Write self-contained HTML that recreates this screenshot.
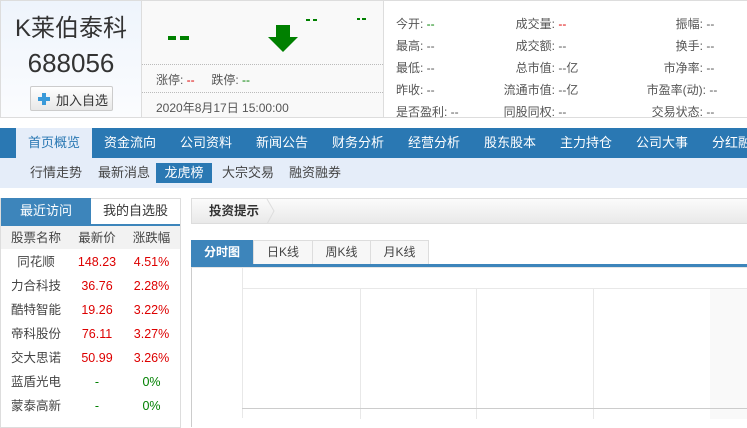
<!DOCTYPE html>
<html><head><meta charset="utf-8"><style>
*{margin:0;padding:0;box-sizing:border-box}
body{width:747px;height:416px;overflow:hidden;background:#fff;font-family:"Liberation Sans","Noto Sans CJK SC",sans-serif;font-size:12px;color:#333;position:relative}
.a{position:absolute;white-space:nowrap}
.g{color:#008000}.r{color:#d00}
</style></head><body>
<!-- top left -->
<div class="a" style="left:0;top:0;width:142px;height:118px;background:linear-gradient(#eef4fc,#fbfcfe);border:1px solid #ddd"></div>
<div class="a" style="left:0;top:8px;width:142px;text-align:center;font-size:24px;color:#333">K莱伯泰科</div>
<div class="a" style="left:0;top:48px;width:142px;text-align:center;font-size:26px;color:#333">688056</div>
<div class="a" style="left:30px;top:86px;width:83px;height:25px;border:1px solid #ccc;border-radius:2px;background:linear-gradient(#fff,#e8e8e8)"></div>
<div class="a" style="left:38px;top:93px;width:12px;height:12px"><div style="position:absolute;left:4px;top:0;width:4px;height:12px;background:#3a9ad9"></div><div style="position:absolute;left:0;top:4px;width:12px;height:4px;background:#3a9ad9"></div></div>
<div class="a" style="left:56px;top:90px;font-size:13px;color:#333">加入自选</div>
<!-- middle -->
<div class="a" style="left:141px;top:0;width:243px;height:118px;background:#f9f9f9;border:1px solid #ddd"></div>
<div class="a" style="left:168px;top:36px;width:8px;height:4px;background:#008000"></div>
<div class="a" style="left:180px;top:36px;width:9px;height:4px;background:#008000"></div>
<svg class="a" style="left:268px;top:24px" width="32" height="30"><path d="M8 1h14v12h8L15 28 0 13h8z" fill="#008000"/></svg>
<div class="a" style="left:306px;top:19px;width:4px;height:2px;background:#008000"></div><div class="a" style="left:313px;top:19px;width:4px;height:2px;background:#008000"></div>
<div class="a" style="left:357px;top:18px;width:3px;height:2px;background:#008000"></div><div class="a" style="left:362px;top:18px;width:4px;height:2px;background:#008000"></div>
<div class="a" style="left:142px;top:64px;width:241px;border-top:1px dotted #bbb"></div>
<div class="a" style="left:156px;top:71px;color:#555">涨停: <span class="r">--</span>&nbsp;&nbsp;&nbsp;&nbsp;&nbsp;跌停: <span class="g">--</span></div>
<div class="a" style="left:142px;top:92px;width:241px;border-top:1px dotted #bbb"></div>
<div class="a" style="left:156px;top:99px;color:#555">2020年8月17日 15:00:00</div>
<!-- right -->
<div class="a" style="left:383px;top:0;width:364px;height:118px;border:1px solid #ddd;border-right:none"></div>
<div class="a" style="left:396px;top:13px;color:#555;line-height:22px">今开: <span class="g">--</span><br>最高: --<br>最低: --<br>昨收: --<br>是否盈利: --</div>
<div class="a" style="left:460px;top:13px;width:130px;color:#555;line-height:22px;text-align:right">
<div style="display:flex;justify-content:flex-end"><span>成交量: </span><span class="r" style="width:35px;text-align:left">&nbsp;--</span></div>
<div style="display:flex;justify-content:flex-end"><span>成交额: </span><span style="width:35px;text-align:left">&nbsp;--</span></div>
<div style="display:flex;justify-content:flex-end"><span>总市值: </span><span style="width:35px;text-align:left">&nbsp;--亿</span></div>
<div style="display:flex;justify-content:flex-end"><span>流通市值: </span><span style="width:35px;text-align:left">&nbsp;--亿</span></div>
<div style="display:flex;justify-content:flex-end"><span>同股同权: </span><span style="width:35px;text-align:left">&nbsp;--</span></div></div>
<div class="a" style="left:600px;top:13px;width:140px;color:#555;line-height:22px">
<div style="display:flex;justify-content:flex-end"><span>振幅: </span><span style="width:37px">&nbsp;--</span></div>
<div style="display:flex;justify-content:flex-end"><span>换手: </span><span style="width:37px">&nbsp;--</span></div>
<div style="display:flex;justify-content:flex-end"><span>市净率: </span><span style="width:37px">&nbsp;--</span></div>
<div style="display:flex;justify-content:flex-end"><span>市盈率(动): </span><span style="width:34px">&nbsp;--</span></div>
<div style="display:flex;justify-content:flex-end"><span>交易状态: </span><span style="width:37px">&nbsp;--</span></div></div>
<!-- nav -->
<div class="a" style="left:0;top:128px;width:747px;height:30px;background:#2a78b3"></div>
<div class="a" style="left:16px;top:128px;width:76px;height:30px;background:#e5edf9"></div>
<div class="a" style="left:16px;top:128px;display:flex;font-size:13px;line-height:30px;color:#fff">
<span style="width:76px;text-align:center;color:#2a78b3">首页概览</span><span style="width:76px;text-align:center">资金流向</span><span style="width:76px;text-align:center">公司资料</span><span style="width:76px;text-align:center">新闻公告</span><span style="width:76px;text-align:center">财务分析</span><span style="width:76px;text-align:center">经营分析</span><span style="width:76px;text-align:center">股东股本</span><span style="width:76px;text-align:center">主力持仓</span><span style="width:76px;text-align:center">公司大事</span><span style="width:76px;text-align:center">分红融资</span></div>
<div class="a" style="left:0;top:158px;width:747px;height:30px;background:#e5edf9"></div>
<div class="a" style="left:156px;top:163px;width:56px;height:20px;background:#2a78b3"></div>
<div class="a" style="left:30px;top:158px;font-size:13px;line-height:30px;color:#444">行情走势</div>
<div class="a" style="left:98px;top:158px;font-size:13px;line-height:30px;color:#444">最新消息</div>
<div class="a" style="left:156px;top:158px;width:56px;text-align:center;font-size:13px;line-height:30px;color:#fff">龙虎榜</div>
<div class="a" style="left:222px;top:158px;font-size:13px;line-height:30px;color:#444">大宗交易</div>
<div class="a" style="left:289px;top:158px;font-size:13px;line-height:30px;color:#444">融资融券</div>
<!-- left panel -->
<div class="a" style="left:0;top:198px;width:181px;height:230px;border:1px solid #ddd"></div>
<div class="a" style="left:1px;top:198px;width:90px;height:26px;background:#3d85bb;color:#fff;text-align:center;line-height:26px;font-size:13px">最近访问</div>
<div class="a" style="left:91px;top:198px;width:89px;height:26px;text-align:center;line-height:26px;font-size:13px">我的自选股</div>
<div class="a" style="left:1px;top:224px;width:179px;height:2px;background:#3d85bb"></div>
<div class="a" style="left:1px;top:226px;width:179px;height:23px;background:#f2f2f2"></div>
<div class="a" style="left:1px;top:226px;width:179px;font-size:12.5px;line-height:24px;color:#444">
<div style="display:flex"><span style="width:70px;text-align:center">股票名称</span><span style="width:52px;text-align:center">最新价</span><span style="width:57px;text-align:center">涨跌幅</span></div>
<div style="display:flex"><span style="width:70px;text-align:center">同花顺</span><span class="r" style="width:52px;text-align:center">148.23</span><span class="r" style="width:57px;text-align:center">4.51%</span></div>
<div style="display:flex"><span style="width:70px;text-align:center">力合科技</span><span class="r" style="width:52px;text-align:center">36.76</span><span class="r" style="width:57px;text-align:center">2.28%</span></div>
<div style="display:flex"><span style="width:70px;text-align:center">酷特智能</span><span class="r" style="width:52px;text-align:center">19.26</span><span class="r" style="width:57px;text-align:center">3.22%</span></div>
<div style="display:flex"><span style="width:70px;text-align:center">帝科股份</span><span class="r" style="width:52px;text-align:center">76.11</span><span class="r" style="width:57px;text-align:center">3.27%</span></div>
<div style="display:flex"><span style="width:70px;text-align:center">交大思诺</span><span class="r" style="width:52px;text-align:center">50.99</span><span class="r" style="width:57px;text-align:center">3.26%</span></div>
<div style="display:flex"><span style="width:70px;text-align:center">蓝盾光电</span><span class="g" style="width:52px;text-align:center">-</span><span class="g" style="width:57px;text-align:center">0%</span></div>
<div style="display:flex"><span style="width:70px;text-align:center">蒙泰高新</span><span class="g" style="width:52px;text-align:center">-</span><span class="g" style="width:57px;text-align:center">0%</span></div>
</div>
<!-- right main -->
<div class="a" style="left:191px;top:198px;width:560px;height:26px;border:1px solid #ddd;background:linear-gradient(#fbfbfb,#e9e9e9)"></div>
<div class="a" style="left:209px;top:198px;line-height:26px;font-weight:bold;font-size:12.5px;color:#333">投资提示</div>
<svg class="a" style="left:266px;top:199px" width="10" height="25"><path d="M1 0L8 12L1 25" fill="none" stroke="#ddd"/></svg>
<div class="a" style="left:191px;top:240px;width:62px;height:25px;background:#3d85bb;color:#fff;font-weight:bold;text-align:center;line-height:25px">分时图</div>
<div class="a" style="left:253px;top:240px;width:60px;height:25px;background:#f7f7f7;border:1px solid #ddd;text-align:center;line-height:23px;color:#444">日K线</div>
<div class="a" style="left:312px;top:240px;width:59px;height:25px;background:#f7f7f7;border:1px solid #ddd;text-align:center;line-height:23px;color:#444">周K线</div>
<div class="a" style="left:370px;top:240px;width:59px;height:25px;background:#f7f7f7;border:1px solid #ddd;text-align:center;line-height:23px;color:#444">月K线</div>
<div class="a" style="left:191px;top:264px;width:556px;height:3px;background:#3d85bb"></div>
<div class="a" style="left:191px;top:267px;width:560px;height:160px;border-left:1px solid #ccc;border-top:1px solid #e5e5e5"></div>
<div class="a" style="left:242px;top:268px;width:1px;height:150px;background:#e8e8e8"></div>
<div class="a" style="left:242px;top:288px;width:505px;height:1px;background:#e8e8e8"></div>
<div class="a" style="left:710px;top:289px;width:37px;height:130px;background:#f9f9f9"></div>
<div class="a" style="left:360px;top:289px;width:1px;height:130px;background:#e8e8e8"></div>
<div class="a" style="left:476px;top:289px;width:1px;height:130px;background:#e8e8e8"></div>
<div class="a" style="left:593px;top:289px;width:1px;height:130px;background:#e8e8e8"></div>
<div class="a" style="left:242px;top:408px;width:505px;height:1px;background:#ccc"></div>
</body></html>
